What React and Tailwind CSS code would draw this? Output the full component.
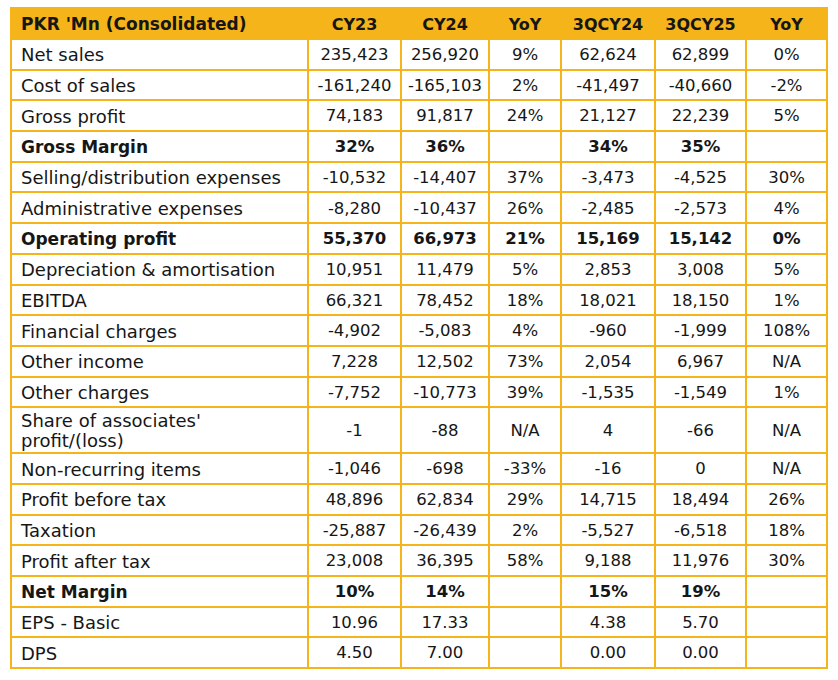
import React from "react";

const rows = [
  ["Net sales", "235,423", "256,920", "9%", "62,624", "62,899", "0%"],
  ["Cost of sales", "-161,240", "-165,103", "2%", "-41,497", "-40,660", "-2%"],
  ["Gross profit", "74,183", "91,817", "24%", "21,127", "22,239", "5%"],
  ["Gross Margin", "32%", "36%", "", "34%", "35%", "", true],
  ["Selling/distribution expenses", "-10,532", "-14,407", "37%", "-3,473", "-4,525", "30%"],
  ["Administrative expenses", "-8,280", "-10,437", "26%", "-2,485", "-2,573", "4%"],
  ["Operating profit", "55,370", "66,973", "21%", "15,169", "15,142", "0%", true],
  ["Depreciation & amortisation", "10,951", "11,479", "5%", "2,853", "3,008", "5%"],
  ["EBITDA", "66,321", "78,452", "18%", "18,021", "18,150", "1%"],
  ["Financial charges", "-4,902", "-5,083", "4%", "-960", "-1,999", "108%"],
  ["Other income", "7,228", "12,502", "73%", "2,054", "6,967", "N/A"],
  ["Other charges", "-7,752", "-10,773", "39%", "-1,535", "-1,549", "1%"],
  ["Share of associates' profit/(loss)", "-1", "-88", "N/A", "4", "-66", "N/A"],
  ["Non-recurring items", "-1,046", "-698", "-33%", "-16", "0", "N/A"],
  ["Profit before tax", "48,896", "62,834", "29%", "14,715", "18,494", "26%"],
  ["Taxation", "-25,887", "-26,439", "2%", "-5,527", "-6,518", "18%"],
  ["Profit after tax", "23,008", "36,395", "58%", "9,188", "11,976", "30%"],
  ["Net Margin", "10%", "14%", "", "15%", "19%", "", true],
  ["EPS - Basic", "10.96", "17.33", "", "4.38", "5.70", ""],
  ["DPS", "4.50", "7.00", "", "0.00", "0.00", ""],
];

const headers = ["CY23", "CY24", "YoY", "3QCY24", "3QCY25", "YoY"];

export default function App() {
  return (
    <div className="bg-white w-[838px] h-[680px] pt-[7px] pl-[10px] font-['DejaVu_Sans',sans-serif] text-[#161616]">
      <table className="table-fixed border-collapse w-[816px]">
        <colgroup>
          <col className="w-[297px]" />
          <col className="w-[93px]" />
          <col className="w-[88px]" />
          <col className="w-[72px]" />
          <col className="w-[94px]" />
          <col className="w-[91px]" />
          <col className="w-[81px]" />
        </colgroup>
        <thead>
          <tr className="bg-[#f4b41a] h-[31px]">
            <th className="border-2 border-[#f4b41a] text-left pl-[9px] pt-[2px] font-bold text-[17px] leading-none">
              PKR 'Mn (Consolidated)
            </th>
            {headers.map((h, i) => (
              <th key={i} className="border-2 border-[#f4b41a] text-center pt-[2px] font-bold text-[16px] leading-none">
                {h}
              </th>
            ))}
          </tr>
        </thead>
        <tbody>
          {rows.map((r, i) => {
            const bold = r[7];
            const tall = r[0].startsWith("Share");
            return (
              <tr key={i} className={tall ? "h-[46px]" : "h-[30.7px]"}>
                <td
                  className={`border-2 border-[#f4b41a] pl-[9px] pr-1 pt-[2px] leading-[20px] whitespace-nowrap ${bold ? "font-bold text-[17px]" : "text-[18px]"}`}
                >
                  {tall ? (
                    <>
                      Share of associates'
                      <br />
                      profit/(loss)
                    </>
                  ) : (
                    r[0]
                  )}
                </td>
                {r.slice(1, 7).map((c, j) => (
                  <td
                    key={j}
                    className={`border-2 border-[#f4b41a] text-center pt-[2px] text-[16.5px] leading-none whitespace-nowrap ${bold ? "font-bold" : ""}`}
                  >
                    {c}
                  </td>
                ))}
              </tr>
            );
          })}
        </tbody>
      </table>
    </div>
  );
}
